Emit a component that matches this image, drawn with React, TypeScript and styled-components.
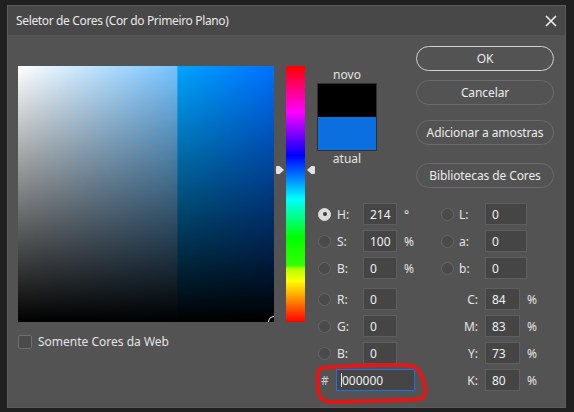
import React from 'react';
import styled, { createGlobalStyle } from 'styled-components';

const GlobalStyle = createGlobalStyle`
  html, body {
    margin: 0;
    padding: 0;
    background: #202020;
  }
  body {
    font-family: "Noto Sans", "Open Sans", sans-serif;
    font-size: 12px;
    color: #e4e4e4;
  }
`;

const hsbRows = [
	{ key: 'H', value: '214', unit: '°', checked: true },
	{ key: 'S', value: '100', unit: '%' },
	{ key: 'B', value: '0', unit: '%' },
];

const rgbRows = [
	{ key: 'R', value: '0' },
	{ key: 'G', value: '0' },
	{ key: 'B', value: '0' },
];

const labRows = [
	{ key: 'L', value: '0' },
	{ key: 'a', value: '0' },
	{ key: 'b', value: '0' },
];

const cmykRows = [
	{ key: 'C', value: '84' },
	{ key: 'M', value: '83' },
	{ key: 'Y', value: '73' },
	{ key: 'K', value: '80' },
];

export default function App() {
	return (
		<Screen>
			<GlobalStyle />
			<Dialog>
				<TitleBar>
					<Title>Seletor de Cores (Cor do Primeiro Plano)</Title>
					<CloseButton>
						<svg width="12" height="12" viewBox="0 0 12 12">
							<path d="M1 1 L11 11 M11 1 L1 11" stroke="#f0f0f0" strokeWidth="1.6" />
						</svg>
					</CloseButton>
				</TitleBar>
				<Body>
					<LeftPane>
						<PickerRow>
							<ColorField>
								<FieldShade />
								<FieldMarker />
							</ColorField>
							<HueWrap>
								<HueBar />
								<HueArrow side="left" />
								<HueArrow side="right" />
							</HueWrap>
						</PickerRow>
						<CheckRow>
							<CheckBox />
							<span>Somente Cores da Web</span>
						</CheckRow>
					</LeftPane>
					<RightPane>
						<TopRow>
							<SwatchBlock>
								<SwatchLabel>novo</SwatchLabel>
								<Swatch>
									<SwatchHalf color="#000000" />
									<SwatchHalf color="#0b6fe0" />
								</Swatch>
								<SwatchLabel>atual</SwatchLabel>
							</SwatchBlock>
							<ButtonCol>
								<PillButton primary>OK</PillButton>
								<PillButton gap={9}>Cancelar</PillButton>
								<PillButton gap={15}>Adicionar a amostras</PillButton>
								<PillButton gap={18}>Bibliotecas de Cores</PillButton>
							</ButtonCol>
						</TopRow>
						<FieldsArea>
							<FieldCol>
								<Group>
									{hsbRows.map(r => (
										<ValueRow key={r.key}>
											<Radio checked={!!r.checked} />
											<Label>{r.key}:</Label>
											<NumInput width={34}>{r.value}</NumInput>
											<Unit>{r.unit}</Unit>
										</ValueRow>
									))}
								</Group>
								<Group>
									{rgbRows.map(r => (
										<ValueRow key={r.key}>
											<Radio checked={false} />
											<Label>{r.key}:</Label>
											<NumInput width={34}>{r.value}</NumInput>
										</ValueRow>
									))}
									<HexRow>
										<Hash>#</Hash>
										<HexInput>
											<Caret />
											000000
										</HexInput>
									</HexRow>
								</Group>
							</FieldCol>
							<FieldCol>
								<Group>
									{labRows.map(r => (
										<LabRow key={r.key}>
											<Radio checked={false} />
											<Label>{r.key}:</Label>
											<NumInput width={42}>{r.value}</NumInput>
										</LabRow>
									))}
								</Group>
								<Group>
									{cmykRows.map(r => (
										<CmykRow key={r.key}>
											<CmykLabel>{r.key}:</CmykLabel>
											<NumInput width={35}>{r.value}</NumInput>
											<Unit>%</Unit>
										</CmykRow>
									))}
								</Group>
							</FieldCol>
						</FieldsArea>
					</RightPane>
				</Body>
			</Dialog>
			<Annotation width="574" height="412" viewBox="0 0 574 412">
				<path
					d="M322 368 C350 366 392 364 413 366 C421 370 426 384 425 394 C424 400 416 400 405 400 L336 402 C323 403 318 398 318 388 C318 378 316 370 322 368 Z"
					fill="none"
					stroke="#e01818"
					strokeWidth="4"
					strokeLinejoin="round"
				/>
			</Annotation>
		</Screen>
	);
}

const Screen = styled.div`
	position: relative;
	width: 574px;
	height: 412px;
	padding: 5px 0 0 7px;
	box-sizing: border-box;
	overflow: hidden;
`;

const Dialog = styled.div`
	width: 559px;
	height: 403px;
	background: #535353;
	border: 1px solid #5c5c5c;
	box-sizing: border-box;
	display: flex;
	flex-direction: column;
`;

const TitleBar = styled.div`
	height: 29px;
	flex: none;
	background: #484848;
	display: flex;
	align-items: center;
	justify-content: space-between;
	padding: 0 8px 0 8px;
`;

const Title = styled.span`
	color: #e8e8e8;
	letter-spacing: -0.35px;
`;

const CloseButton = styled.div`
	width: 12px;
	height: 12px;
	display: flex;
`;

const Body = styled.div`
	display: flex;
	align-items: flex-start;
	padding: 11px 0 0 10px;
`;

const LeftPane = styled.div`
	margin-top: 20px;
	display: flex;
	flex-direction: column;
`;

const PickerRow = styled.div`
	display: flex;
	gap: 12px;
`;

const ColorField = styled.div`
	position: relative;
	width: 256px;
	height: 256px;
	overflow: hidden;
	background: linear-gradient(
		to right,
		#ffffff 0%,
		#74c2ff 62%,
		#00a4ff 62.5%,
		#0070ff 100%
	);
`;

const FieldShade = styled.div`
	position: absolute;
	inset: 0;
	background: linear-gradient(to bottom, rgba(0, 0, 0, 0) 0%, #000 100%);
`;

const FieldMarker = styled.div`
	position: absolute;
	right: -6px;
	bottom: -6px;
	width: 10px;
	height: 10px;
	border-radius: 50%;
	border: 1px solid #ffffff;
`;

const HueWrap = styled.div`
	position: relative;
	width: 19px;
	height: 256px;
`;

const HueBar = styled.div`
	width: 100%;
	height: 100%;
	background: linear-gradient(
		to bottom,
		#ff0000 0%,
		#ff00ff 18%,
		#0000ff 35%,
		#00ffff 52%,
		#00ff00 67%,
		#33ff00 78%,
		#aaff00 79%,
		#ffff00 84%,
		#ff0000 100%
	);
`;

const HueArrow = styled.div<{ side: 'left' | 'right' }>`
	position: absolute;
	top: 100px;
	${p => (p.side === 'left' ? 'left: -10px;' : 'right: -10px;')}
	width: 8px;
	height: 8px;
	background: #e2e2e2;
	clip-path: ${p =>
		p.side === 'left'
			? 'polygon(0 0, 45% 0, 100% 50%, 45% 100%, 0 100%)'
			: 'polygon(100% 0, 55% 0, 0 50%, 55% 100%, 100% 100%)'};
	border-radius: 1px;
`;

const CheckRow = styled.div`
	margin-top: 11px;
	display: flex;
	align-items: center;
	gap: 6px;
`;

const CheckBox = styled.div`
	width: 12px;
	height: 12px;
	border: 1px solid #6e6e6e;
	border-radius: 2px;
	background: #4a4a4a;
`;

const RightPane = styled.div`
	margin-left: 12px;
	display: flex;
	flex-direction: column;
`;

const TopRow = styled.div`
	display: flex;
	align-items: flex-start;
`;

const SwatchBlock = styled.div`
	margin-top: 21px;
	width: 60px;
	display: flex;
	flex-direction: column;
	align-items: center;
`;

const SwatchLabel = styled.div`
	height: 16px;
	line-height: 16px;
`;

const Swatch = styled.div`
	width: 60px;
	height: 68px;
	box-sizing: border-box;
	border: 1px solid #303030;
	display: flex;
	flex-direction: column;
`;

const SwatchHalf = styled.div<{ color: string }>`
	flex: 1;
	background: ${p => p.color};
`;

const ButtonCol = styled.div`
	margin-left: 39px;
	width: 138px;
	display: flex;
	flex-direction: column;
`;

const PillButton = styled.div<{ primary?: boolean; gap?: number }>`
	height: 25px;
	margin-top: ${p => p.gap ?? 0}px;
	box-sizing: border-box;
	border-radius: 13px;
	border: ${p => (p.primary ? '1.5px solid #d0d0d0' : '1px solid #6a6a6a')};
	display: flex;
	align-items: center;
	justify-content: center;
	color: #ececec;
	letter-spacing: -0.1px;
`;

const FieldsArea = styled.div`
	margin-top: 15px;
	display: grid;
	grid-template-columns: 123px 110px;
`;

const FieldCol = styled.div`
	display: flex;
	flex-direction: column;
	gap: 9px;
`;

const Group = styled.div`
	display: flex;
	flex-direction: column;
	gap: 5px;
`;

const ValueRow = styled.div`
	height: 22px;
	display: grid;
	grid-template-columns: 20px 26px 34px auto;
	align-items: center;
`;

const LabRow = styled(ValueRow)`
	grid-template-columns: 19px 26px 42px;
`;

const CmykRow = styled.div`
	height: 22px;
	display: grid;
	grid-template-columns: 45px 35px auto;
	align-items: center;
`;

const Radio = styled.div<{ checked: boolean }>`
	width: 13px;
	height: 13px;
	margin-left: 1px;
	box-sizing: border-box;
	border-radius: 50%;
	position: relative;
	background: ${p => (p.checked ? '#dcdcdc' : '#4a4a4a')};
	border: 1px solid ${p => (p.checked ? '#dcdcdc' : '#666666')};
	&::after {
		content: '';
		display: ${p => (p.checked ? 'block' : 'none')};
		position: absolute;
		left: 3.5px;
		top: 3.5px;
		width: 4px;
		height: 4px;
		border-radius: 50%;
		background: #3a3a3a;
	}
`;

const Label = styled.span``;

const CmykLabel = styled.span`
	text-align: right;
	padding-right: 7px;
`;

const NumInput = styled.div<{ width: number }>`
	width: ${p => p.width}px;
	height: 22px;
	box-sizing: border-box;
	background: #454545;
	border: 1px solid #5e5e5e;
	padding-left: 6px;
	display: flex;
	align-items: center;
	color: #f0f0f0;
`;

const Unit = styled.span`
	margin-left: 7px;
`;

const HexRow = styled.div`
	height: 22px;
	display: flex;
	align-items: center;
	padding-left: 4px;
`;

const Hash = styled.span`
	width: 15px;
	color: #cfcfcf;
`;

const HexInput = styled.div`
	width: 79px;
	height: 22px;
	box-sizing: border-box;
	background: #454545;
	border: 1px solid #1d74e0;
	padding-left: 4px;
	display: flex;
	align-items: center;
	color: #f0f0f0;
`;

const Caret = styled.span`
	width: 1px;
	height: 14px;
	background: #e8e8e8;
`;

const Annotation = styled.svg`
	position: absolute;
	left: 0;
	top: 0;
	pointer-events: none;
`;
